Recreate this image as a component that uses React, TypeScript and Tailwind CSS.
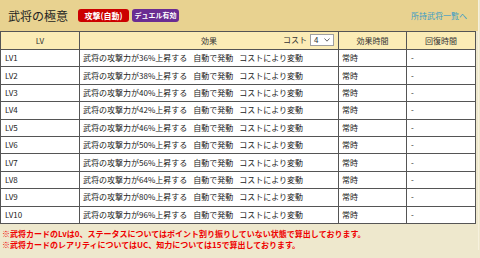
const rates = [36, 38, 40, 42, 46, 50, 56, 64, 80, 96];

const cell = "flex items-center border-r border-b border-[#555] overflow-hidden whitespace-nowrap";

function CostSelect() {
  return (
    <div className="flex h-[12px] w-[24px] items-center justify-between border border-[#a0a0a0] bg-white pl-[3px] pr-[3px] text-[8px] leading-none">
      <span>4</span>
      <svg width="6" height="4" viewBox="0 0 6 4">
        <polyline points="0.5,0.5 3,3.2 5.5,0.5" fill="none" stroke="#666" strokeWidth="1" />
      </svg>
    </div>
  );
}

export default function App() {
  return (
    <div
      className="h-[258px] w-[480px] overflow-hidden bg-[#eee8cd] text-[#222]"
      style={{ fontFamily: '"Noto Sans CJK JP", "Noto Sans", sans-serif' }}
    >
      <div className="w-[479px] border-r border-[#f6f1dd]">
        <div className="flex h-[31px] items-center bg-[#e8d290] pl-[8px] pr-[11px]">
          <span className="text-[12px] leading-none text-[#222]">武将の極意</span>
          <span className="ml-[10px] flex h-[13px] w-[51px] items-center justify-center whitespace-nowrap rounded-[3px] bg-[#cc0000] text-[8px] font-bold leading-none text-white">
            攻撃(自動)
          </span>
          <span className="ml-[3px] flex h-[13px] w-[47px] items-center justify-center whitespace-nowrap rounded-[3px] bg-[#6a2d92] text-[7px] font-bold leading-none text-white">
            デュエル有効
          </span>
          <span className="ml-auto text-[8px] leading-none text-[#3a9cc6]">所持武将一覧へ</span>
        </div>

        <div className="w-[476px] border-t border-l border-[#555] text-[8px] leading-none">
          <div className="grid h-[18px] grid-cols-[79px_259px_68px_69px] bg-[#fbecb6] text-[#333]">
            <div className={`${cell} justify-center`}>LV</div>
            <div className={`${cell} relative justify-center`}>
              <span>効果</span>
              <div className="absolute right-[4px] top-[2px] flex items-center gap-[3px]">
                <span>コスト</span>
                <CostSelect />
              </div>
            </div>
            <div className={`${cell} justify-center`}>効果時間</div>
            <div className={`${cell} justify-center`}>回復時間</div>
          </div>
          {rates.map((r, i) => (
            <div key={r} className="grid h-[17.4px] grid-cols-[79px_259px_68px_69px] bg-white">
              <div className={`${cell} pl-[4px]`}>LV{i + 1}</div>
              <div className={`${cell} pl-[3px]`}>
                <span className="mr-[6px]">武将の攻撃力が{r}%上昇する</span>
                <span className="mr-[6px]">自動で発動</span>
                <span>コストにより変動</span>
              </div>
              <div className={`${cell} pl-[3px]`}>常時</div>
              <div className={`${cell} pl-[4px]`}>-</div>
            </div>
          ))}
        </div>

        <div className="pl-[2px] pt-[4px] text-[8px] font-bold leading-[11px] text-[#ee0000]">
          <p>※武将カードのLvは0、ステータスについてはポイント割り振りしていない状態で算出しております。</p>
          <p>※武将カードのレアリティについてはUC、知力については15で算出しております。</p>
        </div>
      </div>
    </div>
  );
}
